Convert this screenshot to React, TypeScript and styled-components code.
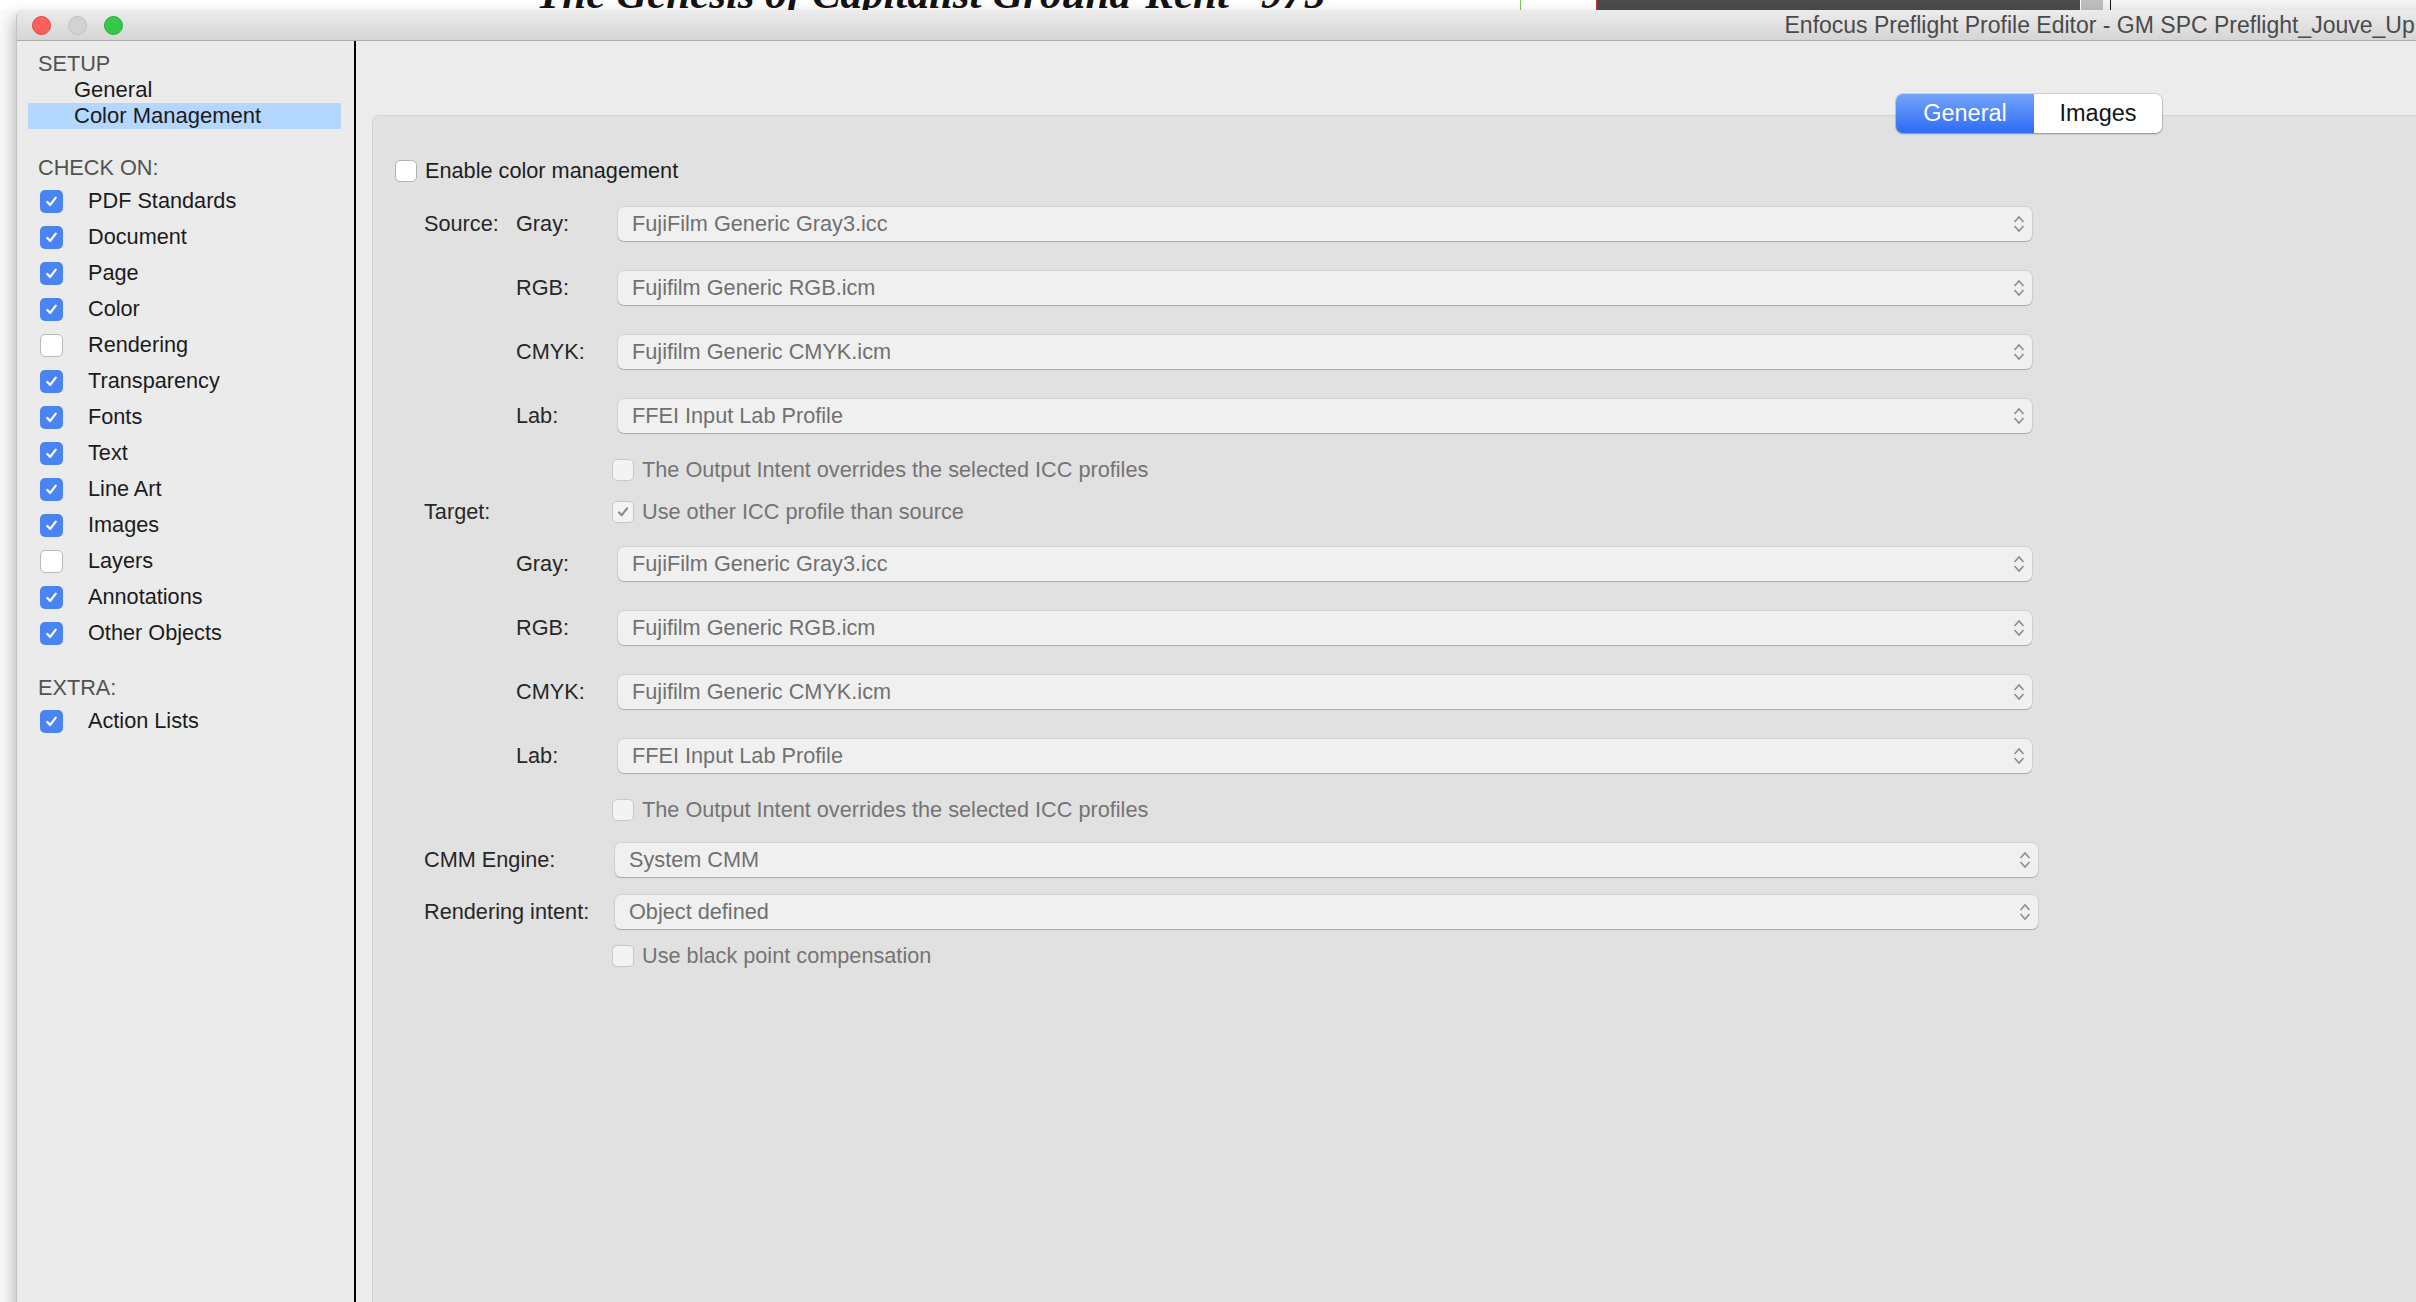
import React from "react";
import styled, { createGlobalStyle } from "styled-components";

const GlobalStyle = createGlobalStyle`
  html, body {
    margin: 0;
    padding: 0;
    background: #fff;
    overflow: hidden;
  }
  body {
    font-family: "Liberation Sans", Arial, Helvetica, sans-serif;
    font-size: 21.7px;
  }
  * {
    box-sizing: border-box;
  }
`;

const Screen = styled.div`
  width: 2416px;
  height: 1302px;
  overflow: hidden;
  background: #fbfbfb;
  display: flex;
  flex-direction: column;
`;

/* desktop content peeking out above the window */
const Backdrop = styled.div`
  height: 10px;
  flex: none;
  display: flex;
  align-items: flex-end;
  overflow: hidden;
  background: #fff;
`;

const BookTitle = styled.span`
  width: 984px;
  margin-left: 536px;
  flex: none;
  font-family: "Liberation Serif", "Times New Roman", serif;
  font-style: italic;
  font-weight: 700;
  font-size: 43px;
  line-height: 0.72;
  color: #141414;
  white-space: pre;
`;

const Strip = styled.span<{ $w: number; $c: string }>`
  width: ${(p) => p.$w}px;
  height: 100%;
  flex: none;
  background: ${(p) => p.$c};
`;

const Window = styled.div`
  margin-left: 16px;
  width: 2620px;
  height: 1320px;
  flex: none;
  display: flex;
  flex-direction: column;
  background: #ececec;
  border-left: 1px solid #c3c3c3;
  border-top-left-radius: 8px;
  box-shadow: -3px 6px 16px rgba(0, 0, 0, 0.25);
  overflow: hidden;
`;

const TitleBar = styled.div`
  height: 31px;
  flex: none;
  display: flex;
  align-items: center;
  padding-left: 14.5px;
  background: linear-gradient(#ececec, #d5d5d5);
  border-bottom: 1px solid #acacac;
`;

const Lights = styled.div`
  display: flex;
  gap: 17px;
`;

const Light = styled.span<{ $c: string; $b: string }>`
  width: 19px;
  height: 19px;
  border-radius: 50%;
  background: ${(p) => p.$c};
  border: 1px solid ${(p) => p.$b};
`;

const WindowTitle = styled.span`
  margin-left: 1662px;
  font-size: 23px;
  color: #4a4a4a;
  white-space: nowrap;
`;

const Body = styled.div`
  flex: 1;
  display: flex;
  min-height: 0;
`;

const Sidebar = styled.aside`
  width: 339px;
  flex: none;
  background: #ebebeb;
  border-right: 2px solid #000;
  padding-top: 10px;
  color: #1b1b1b;
`;

const SectionHead = styled.div<{ $gap?: number }>`
  height: 26px;
  display: flex;
  align-items: center;
  padding-left: 21px;
  margin-top: ${(p) => p.$gap ?? 0}px;
  color: #525252;
`;

const NavItem = styled.div<{ $selected?: boolean }>`
  height: 26px;
  display: flex;
  align-items: center;
  margin: 0 13px 0 11px;
  padding-left: 46px;
  font-size: 22px;
  background: ${(p) => (p.$selected ? "#b3d7fe" : "transparent")};
`;

const CheckList = styled.div`
  margin-top: 2px;
`;

const CheckItem = styled.div`
  height: 36px;
  display: flex;
  align-items: center;
  gap: 25px;
  padding-left: 23px;
`;

const SideBox = styled.span<{ $on: boolean }>`
  width: 23px;
  height: 23px;
  flex: none;
  border-radius: 5px;
  display: flex;
  align-items: center;
  justify-content: center;
  background: ${(p) => (p.$on ? "#4a83f2" : "#fff")};
  border: ${(p) => (p.$on ? "none" : "1px solid #b9b9b9")};
`;

const Main = styled.main`
  flex: 1;
  display: flex;
  flex-direction: column;
  padding-top: 53px;
`;

const TabsRow = styled.div`
  position: relative;
  z-index: 1;
  display: flex;
  padding-left: 1540px;
`;

const Segmented = styled.div`
  display: flex;
  height: 39px;
  border-radius: 7px;
  overflow: hidden;
  box-shadow: 0 0 0 1px rgba(0, 0, 0, 0.1), 0 1px 2px rgba(0, 0, 0, 0.3);
`;

const Segment = styled.div<{ $active?: boolean; $w: number }>`
  width: ${(p) => p.$w}px;
  display: flex;
  align-items: center;
  justify-content: center;
  font-size: 23.5px;
  color: ${(p) => (p.$active ? "#fff" : "#151515")};
  background: ${(p) =>
    p.$active ? "linear-gradient(#73a4f9, #2d6bf5)" : "#fff"};
`;

const GroupBox = styled.section`
  flex: 1;
  margin: -18px 0 0 16px;
  padding: 34px 0 0 22px;
  background: #e1e1e1;
  border: 1px solid #d2d2d2;
  border-radius: 7px;
`;

const FormRow = styled.div<{ $h: number }>`
  height: ${(p) => p.$h}px;
  display: flex;
  align-items: center;
  color: #272727;
`;

const GroupLabel = styled.span<{ $w?: number }>`
  width: ${(p) => p.$w ?? 92}px;
  margin-left: 29px;
  flex: none;
`;

const ChannelLabel = styled.span`
  width: 96px;
  flex: none;
`;

const Select = styled.div<{ $inset: number; $w: number }>`
  margin-left: ${(p) => p.$inset}px;
  width: ${(p) => p.$w}px;
  height: 34px;
  flex: none;
  display: flex;
  align-items: center;
  justify-content: space-between;
  padding: 0 7px 0 14px;
  background: #f0f0f0;
  border-radius: 6px;
  box-shadow: 0 0 0 1px rgba(0, 0, 0, 0.06), 0 1px 1px rgba(0, 0, 0, 0.2);
  color: #707070;
`;

const Option = styled.label<{ $disabled?: boolean }>`
  display: flex;
  align-items: center;
  gap: 8px;
  color: ${(p) => (p.$disabled ? "#747474" : "#1e1e1e")};
`;

const FormBox = styled.span<{ $disabled?: boolean }>`
  width: 22px;
  height: 22px;
  flex: none;
  border-radius: 5px;
  display: flex;
  align-items: center;
  justify-content: center;
  background: ${(p) => (p.$disabled ? "#f3f3f3" : "#fff")};
  border: 1px solid ${(p) => (p.$disabled ? "#c8c8c8" : "#b2b2b2")};
`;

const Chevrons = () => (
  <svg width="12" height="20" viewBox="0 0 12 20">
    <path d="M1.5 8 L6 3 L10.5 8" fill="none" stroke="#8e8e8e" strokeWidth="1.6" />
    <path d="M1.5 12 L6 17 L10.5 12" fill="none" stroke="#8e8e8e" strokeWidth="1.6" />
  </svg>
);

const Tick = ({ color, size }: { color: string; size: number }) => (
  <svg width={size} height={size} viewBox="0 0 20 20">
    <path d="M5 10.5 L8.5 14 L15 5.5" fill="none" stroke={color} strokeWidth="2.6" strokeLinecap="round" strokeLinejoin="round" />
  </svg>
);

const checks: [string, boolean][] = [
  ["PDF Standards", true],
  ["Document", true],
  ["Page", true],
  ["Color", true],
  ["Rendering", false],
  ["Transparency", true],
  ["Fonts", true],
  ["Text", true],
  ["Line Art", true],
  ["Images", true],
  ["Layers", false],
  ["Annotations", true],
  ["Other Objects", true],
];

const profiles: [string, string][] = [
  ["Gray:", "FujiFilm Generic Gray3.icc"],
  ["RGB:", "Fujifilm Generic RGB.icm"],
  ["CMYK:", "Fujifilm Generic CMYK.icm"],
  ["Lab:", "FFEI Input Lab Profile"],
];

function SideCheck({ label, on }: { label: string; on: boolean }) {
  return (
    <CheckItem>
      <SideBox $on={on}>{on && <Tick color="#fff" size={17} />}</SideBox>
      <span>{label}</span>
    </CheckItem>
  );
}

function CheckOption({
  label,
  checked,
  disabled,
}: {
  label: string;
  checked?: boolean;
  disabled?: boolean;
}) {
  return (
    <Option $disabled={disabled}>
      <FormBox $disabled={disabled}>
        {checked && <Tick color="#8a8a8a" size={16} />}
      </FormBox>
      {label}
    </Option>
  );
}

function ProfileRows({ group }: { group: string }) {
  return (
    <>
      {profiles.map(([channel, value], i) => (
        <FormRow $h={64} key={channel}>
          <GroupLabel>{i === 0 ? group : ""}</GroupLabel>
          <ChannelLabel>{channel}</ChannelLabel>
          <Select $inset={6} $w={1414}>
            <span>{value}</span>
            <Chevrons />
          </Select>
        </FormRow>
      ))}
    </>
  );
}

export default function App() {
  return (
    <>
      <GlobalStyle />
      <Screen>
        <Backdrop>
          <BookTitle>The Genesis of Capitalist Ground-Rent   975</BookTitle>
          <Strip $w={1} $c="#7bc94f" />
          <Strip $w={75} $c="#fff" />
          <Strip $w={1} $c="#d23a2f" />
          <Strip $w={483} $c="#4b4b4b" />
          <Strip $w={1} $c="#fff" />
          <Strip $w={22} $c="#bfbfbf" />
          <Strip $w={7} $c="#f4f4f4" />
          <Strip $w={1} $c="#111" />
          <Strip $w={306} $c="#f4f4f4" />
        </Backdrop>
        <Window>
          <TitleBar>
            <Lights>
              <Light $c="#fc605c" $b="#e0453f" />
              <Light $c="#d2d2d2" $b="#c0c0c0" />
              <Light $c="#35c84a" $b="#25ad38" />
            </Lights>
            <WindowTitle>Enfocus Preflight Profile Editor - GM SPC Preflight_Jouve_Up</WindowTitle>
          </TitleBar>
          <Body>
            <Sidebar>
              <SectionHead>SETUP</SectionHead>
              <NavItem>General</NavItem>
              <NavItem $selected>Color Management</NavItem>
              <SectionHead $gap={26}>CHECK ON:</SectionHead>
              <CheckList>
                {checks.map(([label, on]) => (
                  <SideCheck key={label} label={label} on={on} />
                ))}
              </CheckList>
              <SectionHead $gap={24}>EXTRA:</SectionHead>
              <CheckList>
                <SideCheck label="Action Lists" on />
              </CheckList>
            </Sidebar>
            <Main>
              <TabsRow>
                <Segmented>
                  <Segment $active $w={138}>General</Segment>
                  <Segment $w={128}>Images</Segment>
                </Segmented>
              </TabsRow>
              <GroupBox>
                <FormRow $h={42}>
                  <CheckOption label="Enable color management" />
                </FormRow>
                <ProfileRows group="Source:" />
                <FormRow $h={44}>
                  <GroupLabel $w={188} />
                  <CheckOption label="The Output Intent overrides the selected ICC profiles" disabled />
                </FormRow>
                <FormRow $h={40}>
                  <GroupLabel $w={188}>Target:</GroupLabel>
                  <CheckOption label="Use other ICC profile than source" checked disabled />
                </FormRow>
                <ProfileRows group="" />
                <FormRow $h={44}>
                  <GroupLabel $w={188} />
                  <CheckOption label="The Output Intent overrides the selected ICC profiles" disabled />
                </FormRow>
                <FormRow $h={56}>
                  <GroupLabel $w={188}>CMM Engine:</GroupLabel>
                  <Select $inset={3} $w={1423}>
                    <span>System CMM</span>
                    <Chevrons />
                  </Select>
                </FormRow>
                <FormRow $h={48}>
                  <GroupLabel $w={188}>Rendering intent:</GroupLabel>
                  <Select $inset={3} $w={1423}>
                    <span>Object defined</span>
                    <Chevrons />
                  </Select>
                </FormRow>
                <FormRow $h={40}>
                  <GroupLabel $w={188} />
                  <CheckOption label="Use black point compensation" disabled />
                </FormRow>
              </GroupBox>
            </Main>
          </Body>
        </Window>
      </Screen>
    </>
  );
}
